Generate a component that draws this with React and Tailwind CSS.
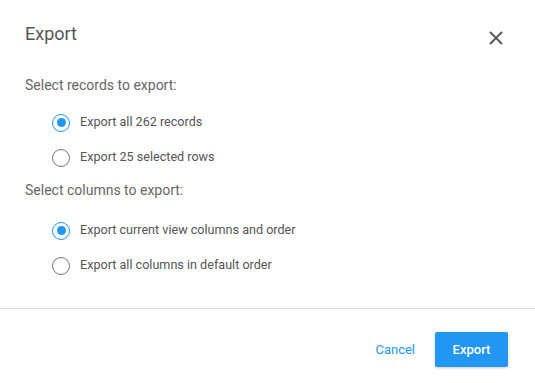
import React, { useState } from 'react';

const Radio = ({ checked, label, onClick }) => (
  <button
    type="button"
    onClick={onClick}
    className="flex items-center h-[35px] pl-[27px] text-left"
  >
    <span
      className={`w-[18px] h-[18px] rounded-full border-[1.5px] flex items-center justify-center ${
        checked ? 'border-[#2196f3]' : 'border-[#757575]'
      }`}
    >
      {checked && <span className="w-[9px] h-[9px] rounded-full bg-[#2196f3]" />}
    </span>
    <span className="ml-[10px] text-[12.6px] text-[#555]">{label}</span>
  </button>
);

const App = () => {
  const [records, setRecords] = useState('all');
  const [columns, setColumns] = useState('current');

  return (
    <div className="w-[535px] h-[383px] bg-white flex flex-col font-['Roboto',sans-serif]">
      {/* Header */}
      <div className="flex items-start justify-between pl-[25px] pr-[32px] pt-[22px]">
        <h2 className="text-[18px] leading-[24px] text-[#555] font-normal">Export</h2>
        <button type="button" className="mt-[9px] text-[#555]">
          <svg width="14" height="14" viewBox="0 0 14 14">
            <path d="M1 1L13 13M13 1L1 13" stroke="currentColor" strokeWidth="1.8" />
          </svg>
        </button>
      </div>

      {/* Body */}
      <div className="flex flex-col pl-[25px] pt-[31px]">
        <p className="text-[14px] leading-[16px] text-[#666] mb-[12px]">Select records to export:</p>
        <Radio checked={records === 'all'} label="Export all 262 records" onClick={() => setRecords('all')} />
        <Radio checked={records === 'selected'} label="Export 25 selected rows" onClick={() => setRecords('selected')} />
        <p className="text-[14px] leading-[16px] text-[#666] mt-[7px] mb-[15px]">Select columns to export:</p>
        <Radio checked={columns === 'current'} label="Export current view columns and order" onClick={() => setColumns('current')} />
        <Radio checked={columns === 'default'} label="Export all columns in default order" onClick={() => setColumns('default')} />
      </div>

      {/* Footer */}
      <div className="mt-auto border-t border-[#e0e0e0] flex items-start justify-end gap-[19px] pr-[27px] pt-[23px] h-[75px]">
        <button type="button" className="h-[35px] text-[13px] text-[#2196f3] px-[1px]">Cancel</button>
        <button
          type="button"
          className="w-[73px] h-[35px] rounded-[2px] bg-[#2196f3] text-white text-[13px] font-medium shadow-[0_1px_3px_rgba(0,0,0,0.2)]"
        >
          Export
        </button>
      </div>
    </div>
  );
};

export default App;
